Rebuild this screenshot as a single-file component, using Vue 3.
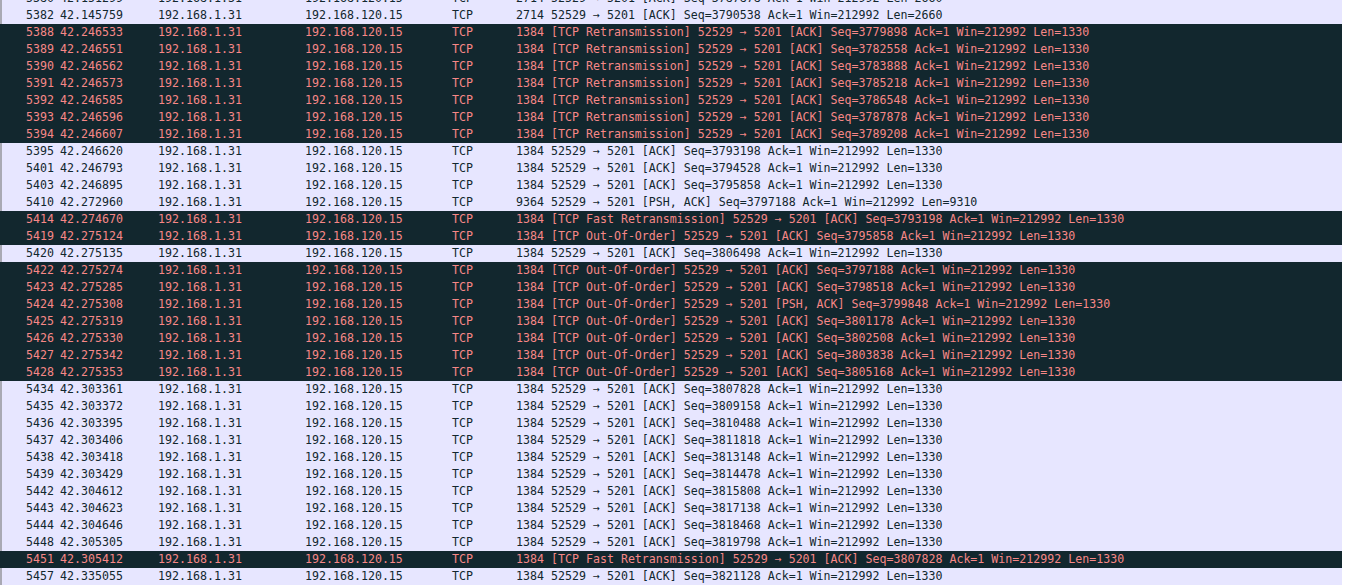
<script setup>
const base = (no, time, len, prefix, seq, flags = 'ACK', l = '1330') => ({
  no, time, len, prefix, dark: !!prefix,
  info: `${prefix ? prefix + ' ' : ''}52529 → 5201 [${flags}] Seq=${seq} Ack=1 Win=212992 Len=${l}`
})
const R = '[TCP Retransmission]'
const F = '[TCP Fast Retransmission]'
const O = '[TCP Out-Of-Order]'
const rows = [
  base(5380, '42.151299', 2714, '', 3787878, 'ACK', '2660'),
  base(5382, '42.145759', 2714, '', 3790538, 'ACK', '2660'),
  base(5388, '42.246533', 1384, R, 3779898),
  base(5389, '42.246551', 1384, R, 3782558),
  base(5390, '42.246562', 1384, R, 3783888),
  base(5391, '42.246573', 1384, R, 3785218),
  base(5392, '42.246585', 1384, R, 3786548),
  base(5393, '42.246596', 1384, R, 3787878),
  base(5394, '42.246607', 1384, R, 3789208),
  base(5395, '42.246620', 1384, '', 3793198),
  base(5401, '42.246793', 1384, '', 3794528),
  base(5403, '42.246895', 1384, '', 3795858),
  base(5410, '42.272960', 9364, '', 3797188, 'PSH, ACK', '9310'),
  base(5414, '42.274670', 1384, F, 3793198),
  base(5419, '42.275124', 1384, O, 3795858),
  base(5420, '42.275135', 1384, '', 3806498),
  base(5422, '42.275274', 1384, O, 3797188),
  base(5423, '42.275285', 1384, O, 3798518),
  base(5424, '42.275308', 1384, O, 3799848, 'PSH, ACK'),
  base(5425, '42.275319', 1384, O, 3801178),
  base(5426, '42.275330', 1384, O, 3802508),
  base(5427, '42.275342', 1384, O, 3803838),
  base(5428, '42.275353', 1384, O, 3805168),
  base(5434, '42.303361', 1384, '', 3807828),
  base(5435, '42.303372', 1384, '', 3809158),
  base(5436, '42.303395', 1384, '', 3810488),
  base(5437, '42.303406', 1384, '', 3811818),
  base(5438, '42.303418', 1384, '', 3813148),
  base(5439, '42.303429', 1384, '', 3814478),
  base(5442, '42.304612', 1384, '', 3815808),
  base(5443, '42.304623', 1384, '', 3817138),
  base(5444, '42.304646', 1384, '', 3818468),
  base(5448, '42.305305', 1384, '', 3819798),
  base(5451, '42.305412', 1384, F, 3807828),
  base(5457, '42.335055', 1384, '', 3821128)
]
</script>

<template>
  <div class="page">
    <div class="list">
      <div v-for="r in rows" :key="r.no" class="row" :class="{ dark: r.dark }">
        <span class="no">{{ r.no }}</span>
        <span class="time">{{ r.time }}</span>
        <span class="src">192.168.1.31</span>
        <span class="dst">192.168.120.15</span>
        <span class="proto">TCP</span>
        <span class="len">{{ r.len }}</span>
        <span class="info">{{ r.info }}</span>
      </div>
    </div>
  </div>
</template>

<style scoped>
.page {
  width: 1360px;
  height: 585px;
  overflow: hidden;
  background: #fff;
}
.list {
  width: 1342px;
  margin-top: -10px;
  font-family: "DejaVu Sans Mono", "Liberation Mono", monospace;
  font-size: 11.62px;
}
.row {
  display: grid;
  grid-template-columns: 58px 98px 147px 147px 64px 35px 1fr;
  height: 17px;
  line-height: 17px;
  border-left: 2px solid #a9a9b4;
  background: #e7e6ff;
  color: #12272e;
  white-space: pre;
}
.row.dark {
  border-left-color: #12272e;
  background: #12272e;
  color: #f78787;
}
.no {
  text-align: right;
  padding-right: 6px;
}
</style>
